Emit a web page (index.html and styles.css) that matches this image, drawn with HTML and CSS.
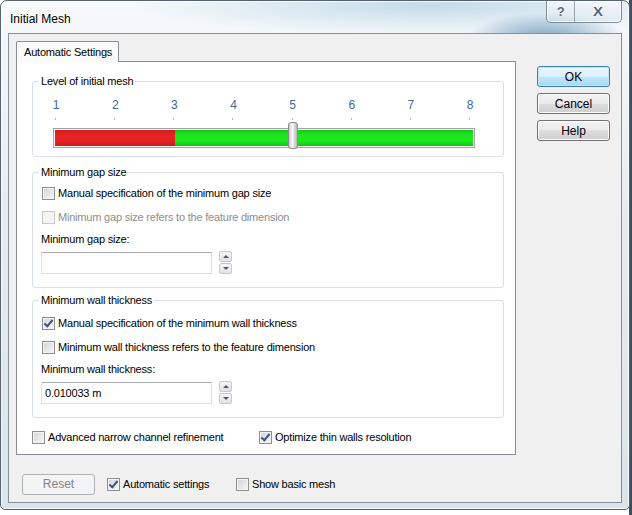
FILE: index.html
```html
<!DOCTYPE html>
<html lang="en">
<head>
    <meta charset="UTF-8">
    <title>Initial Mesh</title>
    <link rel="stylesheet" href="styles.css">
</head>
<body>
<div class="window">
    <div class="titlebar">
        <span class="title">Initial Mesh</span>
        <div class="caption-btns">
            <span class="cap-btn help">?</span>
            <span class="cap-btn close">X</span>
        </div>
    </div>
    <div class="client">
        <div class="main">
            <div class="tabs">
                <div class="tab">Automatic Settings</div>
                <div class="panel">
                    <fieldset class="group level">
                        <legend>Level of initial mesh</legend>
                        <div class="scale">
                            <span>1</span><span>2</span><span>3</span><span>4</span>
                            <span>5</span><span>6</span><span>7</span><span>8</span>
                        </div>
                        <div class="ticks">
                            <span></span><span></span><span></span><span></span>
                            <span></span><span></span><span></span><span></span>
                        </div>
                        <div class="bar">
                            <div class="bar-red"></div>
                            <div class="bar-green"></div>
                            <div class="thumb"></div>
                        </div>
                    </fieldset>

                    <fieldset class="group gap">
                        <legend>Minimum gap size</legend>
                        <label class="check-row"><span class="cb"></span>Manual specification of the minimum gap size</label>
                        <label class="check-row disabled"><span class="cb"></span>Minimum gap size refers to the feature dimension</label>
                        <div class="field-label">Minimum gap size:</div>
                        <div class="field">
                            <div class="textbox"></div>
                            <div class="spin"><span class="up"></span><span class="down"></span></div>
                        </div>
                    </fieldset>

                    <fieldset class="group wall">
                        <legend>Minimum wall thickness</legend>
                        <label class="check-row"><span class="cb checked"></span>Manual specification of the minimum wall thickness</label>
                        <label class="check-row"><span class="cb"></span>Minimum wall thickness refers to the feature dimension</label>
                        <div class="field-label">Minimum wall thickness:</div>
                        <div class="field">
                            <div class="textbox">0.010033 m</div>
                            <div class="spin"><span class="up"></span><span class="down"></span></div>
                        </div>
                    </fieldset>

                    <div class="opts">
                        <label class="check-row narrow"><span class="cb"></span>Advanced narrow channel refinement</label>
                        <label class="check-row"><span class="cb checked"></span>Optimize thin walls resolution</label>
                    </div>
                </div>
            </div>
            <div class="side-btns">
                <button class="btn default">OK</button>
                <button class="btn">Cancel</button>
                <button class="btn">Help</button>
            </div>
        </div>
        <div class="footer">
            <button class="btn reset" disabled>Reset</button>
            <label class="check-row auto"><span class="cb checked"></span>Automatic settings</label>
            <label class="check-row"><span class="cb"></span>Show basic mesh</label>
        </div>
    </div>
</div>
</body>
</html>
```

FILE: styles.css
```css
* {
    margin: 0;
    padding: 0;
    box-sizing: border-box;
}
body {
    width: 632px;
    height: 515px;
    overflow: hidden;
    background: linear-gradient(to right, #ffffff 629px, #3d4f60 629px);
    font-family: "Liberation Sans", Arial, sans-serif;
    font-size: 11px;
    letter-spacing: -0.2px;
    color: #000;
}
.window {
    width: 630px;
    height: 510px;
    border: 1px solid #56636f;
    border-radius: 7px 7px 5px 5px;
    padding: 0 7px 6px 7px;
    display: flex;
    flex-direction: column;
    background:
        radial-gradient(ellipse 80px 26px at 545px 38px, rgba(80, 135, 172, 0.8), rgba(80, 135, 172, 0) 100%),
        radial-gradient(ellipse 300px 30px at 430px 4px, rgba(190, 216, 232, 0.9), rgba(190, 216, 232, 0) 100%),
        linear-gradient(#f7f9fb, #e6edf2 40%, #dbe4ea);
    box-shadow: inset 0 0 0 1px rgba(255, 255, 255, 0.7);
}
.titlebar {
    height: 32px;
    display: flex;
    align-items: flex-start;
}
.title {
    padding: 11px 0 0 2px;
    font-size: 12px;
    letter-spacing: 0;
    color: #000;
    text-shadow: 0 0 6px #fff, 0 0 3px #fff;
}
.caption-btns {
    margin-left: auto;
    display: flex;
    border: 1px solid #7c8a98;
    border-top: none;
    border-radius: 0 0 5px 5px;
    overflow: hidden;
    background: linear-gradient(rgba(255, 255, 255, 0.6), rgba(215, 228, 238, 0.5));
    box-shadow: inset 0 0 0 1px rgba(255, 255, 255, 0.8);
}
.cap-btn {
    height: 21px;
    display: flex;
    align-items: center;
    justify-content: center;
    font-weight: bold;
    font-size: 13px;
    color: #5b6772;
    text-shadow: 0 0 2px #fff, 0 0 1px #fff;
}
.cap-btn.help {
    width: 28px;
    border-right: 1px solid #9aa6b1;
}
.cap-btn.close {
    width: 46px;
    font-size: 13px;
    transform: scaleX(1.15);
}
.client {
    flex: 1;
    background: #f0f0f0;
    border: 1px solid #84909c;
    padding: 7px 7px 0 7px;
    display: flex;
    flex-direction: column;
}
.main {
    display: flex;
}
.tabs {
    width: 500px;
}
.tab {
    width: 103px;
    height: 21px;
    border: 1px solid #898c95;
    border-bottom: none;
    border-radius: 2px 2px 0 0;
    background: #fafafa;
    padding: 4px 0 0 7px;
    position: relative;
    z-index: 1;
}
.panel {
    margin-top: -1px;
    height: 394px;
    border: 1px solid #898c95;
    background: #fff;
    padding: 12px 11px 0 15px;
}
.group {
    border: 1px solid #d5dfe5;
    border-radius: 3px;
    padding: 0;
}
.group legend {
    margin-left: 6px;
    padding: 0 2px;
    line-height: 14px;
}
.level {
    padding-bottom: 8px;
}
.scale {
    margin: 10px 0 0 18px;
    width: 424px;
    display: flex;
    justify-content: space-between;
}
.scale span {
    width: 10px;
    text-align: center;
    font-size: 12px;
    line-height: 14px;
    color: #4066a4;
}
.ticks {
    margin: 6px 0 0 18px;
    width: 424px;
    height: 2px;
    display: flex;
    justify-content: space-between;
}
.ticks span {
    width: 10px;
    height: 2px;
    background: linear-gradient(to right, transparent 4px, #b8bcc4 4px, #b8bcc4 5px, transparent 5px);
}
.bar {
    position: relative;
    margin: 8px 0 0 20px;
    width: 422px;
    height: 20px;
    border: 1px solid #a4a4a4;
    padding: 1px;
    background: #fff;
    display: flex;
}
.bar-red {
    width: 120px;
    background: linear-gradient(#d41c1c, #e42424 30%, #e42424 70%, #cc1a1a);
}
.bar-green {
    flex: 1;
    background: linear-gradient(#14c814, #1ee61e 30%, #1ee61e 70%, #12c412);
}
.thumb {
    position: absolute;
    left: 234px;
    top: -7px;
    width: 10px;
    height: 27px;
    border: 1px solid #8c8c8c;
    border-radius: 3px;
    background: linear-gradient(to right, #c8c8c8, #fafafa 40%, #e6e6e6 60%, #b4b4b4);
}
.gap {
    margin-top: 8px;
    padding: 2px 0 13px 0;
}
.wall {
    margin-top: 5px;
    padding: 4px 0 13px 0;
}
.check-row {
    display: flex;
    align-items: center;
    height: 24px;
    padding-left: 9px;
}
.check-row.disabled {
    color: #8d8d8d;
}
.cb {
    width: 13px;
    height: 13px;
    margin-right: 3px;
    flex-shrink: 0;
    border: 1px solid #8f8f8f;
    background: linear-gradient(135deg, #d2d5da, #f7f7f7);
    box-shadow: inset 0 0 0 1px #f4f4f4;
    position: relative;
}
.disabled .cb {
    border-color: #c8c8c8;
    background: #f4f4f4;
}
.cb.checked::after {
    content: "";
    position: absolute;
    left: 3px;
    top: 0px;
    width: 3px;
    height: 7px;
    border-right: 2px solid #3e5381;
    border-bottom: 2px solid #3e5381;
    transform: rotate(40deg);
}
.field-label {
    height: 20px;
    line-height: 20px;
    padding-left: 8px;
}
.field {
    display: flex;
    align-items: center;
    margin-top: 2px;
    padding-left: 8px;
}
.textbox {
    width: 171px;
    height: 22px;
    border: 1px solid #dbdfe6;
    border-top-color: #abadb3;
    border-left-color: #e2e3ea;
    background: #fff;
    padding: 3px 0 0 3px;
    line-height: 14px;
}
.spin {
    margin-left: 7px;
    width: 13px;
    height: 23px;
    display: flex;
    flex-direction: column;
    gap: 1px;
}
.spin span {
    flex: 1;
    border: 1px solid #c6c9ce;
    border-radius: 2px;
    background: linear-gradient(#f6f6f6, #e2e2e2);
    position: relative;
}
.spin span::after {
    content: "";
    position: absolute;
    left: 3px;
    width: 0;
    height: 0;
    border-left: 3px solid transparent;
    border-right: 3px solid transparent;
}
.spin .up::after {
    top: 3px;
    border-bottom: 3px solid #4d5866;
}
.spin .down::after {
    top: 3px;
    border-top: 3px solid #4d5866;
}
.opts {
    margin-top: 10px;
    display: flex;
}
.opts .check-row {
    height: 18px;
    padding-left: 0;
}
.opts .narrow {
    width: 227px;
}
.side-btns {
    margin: 25px 0 0 21px;
    display: flex;
    flex-direction: column;
    gap: 6px;
}
.btn {
    width: 73px;
    height: 21px;
    border: 1px solid #707070;
    border-radius: 3px;
    background: linear-gradient(#f2f2f2, #ebebeb 50%, #dddddd 50%, #cfcfcf);
    box-shadow: inset 0 0 0 1px #fcfcfc;
    font-family: "Liberation Sans", Arial, sans-serif;
    font-size: 12px;
    color: #000;
}
.btn.default {
    border-color: #3c7fb1;
    background: linear-gradient(#eaf6fd, #d9f0fc 50%, #bee6fd 50%, #a7d9f5);
    box-shadow: inset 0 0 0 1px #c2e4f6;
}
.footer {
    margin-top: 17px;
    display: flex;
    align-items: center;
}
.btn.reset {
    margin-left: 6px;
    margin-right: 12px;
    border-color: #adb2b5;
    background: #f4f4f4;
    box-shadow: none;
    color: #838383;
}
.footer .check-row {
    padding-left: 0;
}
.footer .auto {
    width: 129px;
}
```
